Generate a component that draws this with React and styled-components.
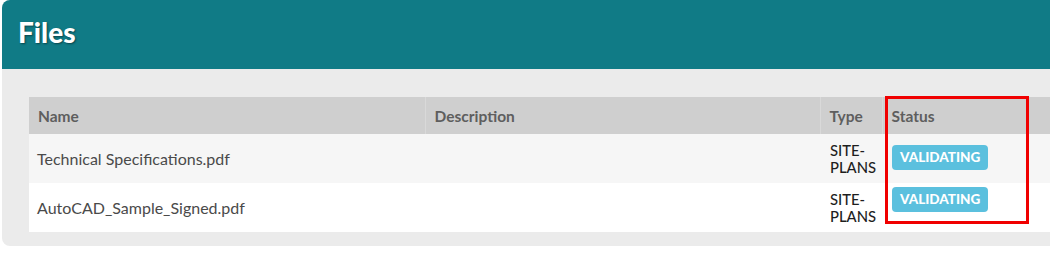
import React from "react";
import styled, { createGlobalStyle } from "styled-components";

const Global = createGlobalStyle`
  html, body { margin: 0; padding: 0; background: #fff; overflow: hidden; }
  body { font-family: Lato, "Open Sans", sans-serif; }
`;

const Panel = styled.section`
  margin-left: 2px;
  width: 1070px;
  background: #ebebeb;
  border-radius: 8px;
  overflow: hidden;
  padding-bottom: 14px;
`;

const Header = styled.header`
  height: 69px;
  background: #107b86;
  display: flex;
  align-items: center;
  padding-left: 16px;
  box-sizing: border-box;
`;

const Title = styled.h1`
  margin: 0;
  margin-top: -5px;
  color: #fff;
  font-size: 28px;
  font-weight: 900;
  text-shadow: 1px 1px 2px rgba(0, 0, 0, 0.45);
`;

const Body = styled.div`
  padding: 28px 0 0 27px;
`;

const TableWrap = styled.div`
  position: relative;
`;

const Table = styled.table`
  border-collapse: collapse;
  width: 1043px;
  table-layout: fixed;
`;

const Th = styled.th`
  height: 37px;
  padding: 0 9px;
  text-align: left;
  background: #cfcfcf;
  color: #5e5e5e;
  font-size: 15.5px;
  font-weight: 700;
  border-left: ${(p) => (p.$first ? "none" : "1px solid #d9d9d9")};
  width: ${(p) => p.$w}px;
  box-sizing: border-box;
`;

const Tr = styled.tr`
  background: ${(p) => (p.$alt ? "#f6f6f6" : "#ffffff")};
`;

const Td = styled.td`
  height: 49px;
  padding: 0 8px;
  font-size: 16px;
  color: ${(p) => (p.$dark ? "#1e1e1e" : "#4a4a4a")};
  line-height: 17px;
  vertical-align: middle;
  box-sizing: border-box;
`;

const TypeCell = styled(Td)`
  font-size: 14.8px;
  padding: 0 0 0 10px;
  font-weight: 500;
`;

const StatusCell = styled(Td)`
  vertical-align: top;
  padding-top: ${(p) => p.$top}px;
`;

const Badge = styled.span`
  display: inline-flex;
  align-items: center;
  height: 25px;
  padding: 0 8px;
  margin-left: 2px;
  border-radius: 4px;
  background: #5bc0de;
  color: #fff;
  font-size: 13.5px;
  font-weight: 900;
  letter-spacing: 0;
`;

const Highlight = styled.div`
  position: absolute;
  left: 856px;
  top: -1px;
  width: 144px;
  height: 128px;
  border: 3px solid #f00000;
  box-sizing: border-box;
  pointer-events: none;
`;

const files = [
  { name: "Technical Specifications.pdf", alt: true, badgeTop: 11 },
  { name: "AutoCAD_Sample_Signed.pdf", alt: false, badgeTop: 4 },
];

export default function App() {
  return (
    <>
      <Global />
      <Panel>
        <Header>
          <Title>Files</Title>
        </Header>
        <Body>
          <TableWrap>
            <Table>
              <thead>
                <tr>
                  <Th $first $w={396}>Name</Th>
                  <Th $w={395}>Description</Th>
                  <Th $w={62}>Type</Th>
                  <Th $w={190}>Status</Th>
                </tr>
              </thead>
              <tbody>
                {files.map((f) => (
                  <Tr key={f.name} $alt={f.alt}>
                    <Td>{f.name}</Td>
                    <Td></Td>
                    <TypeCell $dark>SITE-<br />PLANS</TypeCell>
                    <StatusCell $top={f.badgeTop}>
                      <Badge>VALIDATING</Badge>
                    </StatusCell>
                  </Tr>
                ))}
              </tbody>
            </Table>
            <Highlight />
          </TableWrap>
        </Body>
      </Panel>
    </>
  );
}
